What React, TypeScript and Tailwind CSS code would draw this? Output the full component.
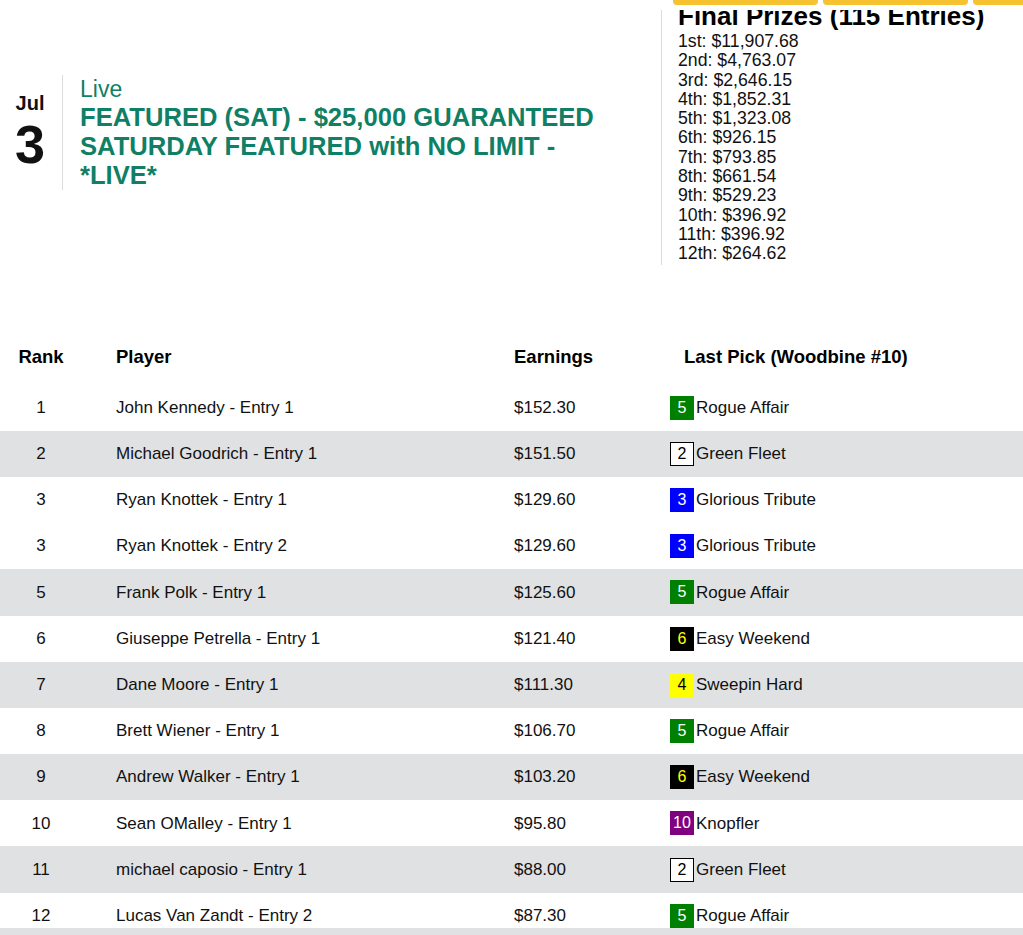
import React from 'react';

type Pick = { num: string; horse: string };

const badgeStyles: Record<string, string> = {
  '2': 'bg-white text-black border-[1.5px] border-black',
  '3': 'bg-[#0000ff] text-white',
  '4': 'bg-[#ffff00] text-black',
  '5': 'bg-[#008000] text-white',
  '6': 'bg-black text-[#ffff00]',
  '10': 'bg-[#800080] text-white',
};

const prizes = [
  ['1st', '$11,907.68'],
  ['2nd', '$4,763.07'],
  ['3rd', '$2,646.15'],
  ['4th', '$1,852.31'],
  ['5th', '$1,323.08'],
  ['6th', '$926.15'],
  ['7th', '$793.85'],
  ['8th', '$661.54'],
  ['9th', '$529.23'],
  ['10th', '$396.92'],
  ['11th', '$396.92'],
  ['12th', '$264.62'],
];

const rows: { rank: number; player: string; earnings: string; pick: Pick; shaded?: boolean }[] = [
  { rank: 1, player: 'John Kennedy - Entry 1', earnings: '$152.30', pick: { num: '5', horse: 'Rogue Affair' } },
  { rank: 2, player: 'Michael Goodrich - Entry 1', earnings: '$151.50', pick: { num: '2', horse: 'Green Fleet' }, shaded: true },
  { rank: 3, player: 'Ryan Knottek - Entry 1', earnings: '$129.60', pick: { num: '3', horse: 'Glorious Tribute' } },
  { rank: 3, player: 'Ryan Knottek - Entry 2', earnings: '$129.60', pick: { num: '3', horse: 'Glorious Tribute' } },
  { rank: 5, player: 'Frank Polk - Entry 1', earnings: '$125.60', pick: { num: '5', horse: 'Rogue Affair' }, shaded: true },
  { rank: 6, player: 'Giuseppe Petrella - Entry 1', earnings: '$121.40', pick: { num: '6', horse: 'Easy Weekend' } },
  { rank: 7, player: 'Dane Moore - Entry 1', earnings: '$111.30', pick: { num: '4', horse: 'Sweepin Hard' }, shaded: true },
  { rank: 8, player: 'Brett Wiener - Entry 1', earnings: '$106.70', pick: { num: '5', horse: 'Rogue Affair' } },
  { rank: 9, player: 'Andrew Walker - Entry 1', earnings: '$103.20', pick: { num: '6', horse: 'Easy Weekend' }, shaded: true },
  { rank: 10, player: 'Sean OMalley - Entry 1', earnings: '$95.80', pick: { num: '10', horse: 'Knopfler' } },
  { rank: 11, player: 'michael caposio - Entry 1', earnings: '$88.00', pick: { num: '2', horse: 'Green Fleet' }, shaded: true },
  { rank: 12, player: 'Lucas Van Zandt - Entry 2', earnings: '$87.30', pick: { num: '5', horse: 'Rogue Affair' } },
];

function Badge({ num }: { num: string }) {
  return (
    <span
      className={`inline-flex items-center justify-center w-[24px] h-[24px] text-[16px] leading-none ${badgeStyles[num]}`}
    >
      {num}
    </span>
  );
}

export default function App() {
  return (
    <div
      className="relative h-[935px] overflow-hidden bg-white text-[#111]"
      style={{ fontFamily: '"Liberation Sans", Arial, Helvetica, sans-serif' }}
    >
      {/* sticky nav remnants over the top of the page */}
      <div className="absolute top-0 left-0 right-0 h-[10px] bg-white z-10 flex gap-[5px] pl-[673px] overflow-hidden">
        <div className="w-[145px] h-[5px] shrink-0 rounded-b-[4px] bg-[#f6c230]" />
        <div className="w-[145px] h-[5px] shrink-0 rounded-b-[4px] bg-[#f6c230]" />
        <div className="w-[145px] h-[5px] shrink-0 rounded-b-[4px] bg-[#f6c230]" />
      </div>

      {/* event header */}
      <div className="flex items-center">
        <div className="flex-1 flex pl-[15px]">
          <div className="flex items-center h-[115px]">
            <div className="w-[30px] flex flex-col items-center gap-[2px] font-bold -mt-[3px]">
              <span className="text-[20px] leading-[24px]">Jul</span>
              <span className="text-[54px] leading-[54px]">3</span>
            </div>
          </div>
          <div className="ml-[17px] border-l border-[#dcdcdc] pl-[17px] text-[#0f7f65] w-[560px]">
            <div className="text-[23px] leading-[28px]">Live</div>
            <div className="text-[25.6px] leading-[29px] font-bold w-[540px]">
              FEATURED (SAT) - $25,000 GUARANTEED SATURDAY FEATURED with NO LIMIT - *LIVE*
            </div>
          </div>
        </div>
        <div className="w-[362px] border-l border-[#dcdcdc] pl-[16px] pb-[1px]">
          <div className="text-[26px] leading-[32px] font-bold text-black whitespace-nowrap">
            Final Prizes (115 Entries)
          </div>
          {prizes.map(([place, amount]) => (
            <div key={place} className="text-[17.7px] leading-[19.3px] text-[#111]">
              {place}: {amount}
            </div>
          ))}
        </div>
      </div>

      {/* leaderboard */}
      <div className="mt-[69px]">
        <div className="grid grid-cols-[116px_398px_156px_1fr] h-[46px] items-center font-bold text-[18.5px] text-black">
          <div className="w-[82px] text-center">Rank</div>
          <div>Player</div>
          <div>Earnings</div>
          <div className="pl-[14px]">Last Pick (Woodbine #10)</div>
        </div>
        <div className="mt-[5px]">
          {rows.map((r, i) => (
            <div
              key={i}
              className={`grid grid-cols-[116px_398px_156px_1fr] h-[46.2px] items-center text-[17px] ${
                r.shaded ? 'bg-[#e0e1e3]' : 'bg-white'
              }`}
            >
              <div className="w-[82px] text-center">{r.rank}</div>
              <div>{r.player}</div>
              <div>{r.earnings}</div>
              <div className="flex items-center gap-[2px]">
                <Badge num={r.pick.num} />
                <span>{r.pick.horse}</span>
              </div>
            </div>
          ))}
        </div>
      </div>

      <div className="absolute bottom-0 left-0 right-0 h-[7px] bg-[#e0e1e3]" />
    </div>
  );
}
